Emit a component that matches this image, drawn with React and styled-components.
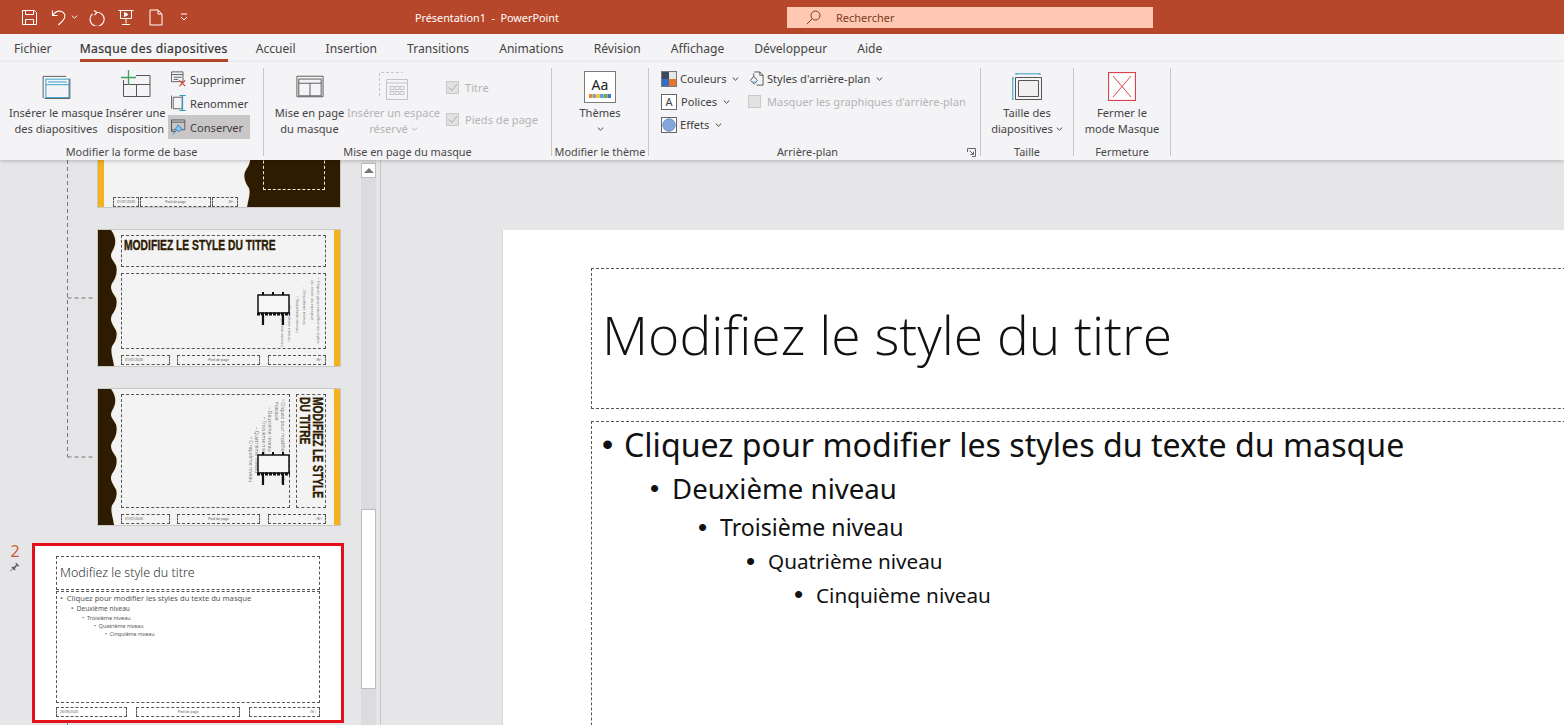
import React from "react";
import styled, { createGlobalStyle } from "styled-components";

const Global = createGlobalStyle`
  html, body { margin: 0; padding: 0; height: 100%; overflow: hidden; }
  body { font-family: "Noto Sans", "Open Sans", sans-serif; color: #3f3e3d; background: #e6e6e8; }
`;

const tabs = ["Fichier", "Masque des diapositives", "Accueil", "Insertion", "Transitions", "Animations", "Révision", "Affichage", "Développeur", "Aide"];
const levels = ["Cliquez pour modifier les styles du texte du masque", "Deuxième niveau", "Troisième niveau", "Quatrième niveau", "Cinquième niveau"];

const Chevron = () => (
  <ChevronSvg viewBox="0 0 7 4"><path d="M.8.6 3.5 3.2 6.2.6" fill="none" stroke="currentColor" strokeWidth="1" /></ChevronSvg>
);

const SaveIcon = () => (
  <svg width="17" height="17" viewBox="0 0 17 17" fill="none" stroke="#fff" strokeWidth="1">
    <path d="M1.500 1.500h12l2 2v12h-14z" /><path d="M4.500 1.500v4h8v-4M4.500 15.500v-5h8v5" />
  </svg>
);
const UndoIcon = () => (
  <svg width="16" height="17" viewBox="0 0 16 17" fill="none" stroke="#fff" strokeWidth="1.100">
    <path d="M1.500 1.500v5h5M1.800 6.200C4 3 7.500 1.500 10.500 2.500c3 1 4.200 4.200 2.800 7-1 2-3.500 4.500-6 6.500" />
  </svg>
);
const RedoIcon = () => (
  <svg width="17" height="17" viewBox="0 0 17 17" fill="none" stroke="#fff" strokeWidth="1.100">
    <path d="M5 1.500 8 3.500 5.500 6M7.500 3.300a7 7 0 1 1-4 1.700" />
  </svg>
);
const SlideShowIcon = () => (
  <svg width="16" height="17" viewBox="0 0 16 17" fill="none" stroke="#fff" strokeWidth="1">
    <path d="M.5 1.500h15M2.500 1.500v8h11v-8M8 9.500v5M4 15.500h8" /><path d="M6.500 3.500v4l3.500-2z" fill="#fff" />
  </svg>
);
const NewDocIcon = () => (
  <svg width="14" height="17" viewBox="0 0 14 17" fill="none" stroke="#fff" strokeWidth="1">
    <path d="M1 1h8l4 4v11H1zM9 1v4h4" />
  </svg>
);
const CustomizeIcon = () => (
  <svg width="8" height="8" viewBox="0 0 8 8" fill="none" stroke="#fff" strokeWidth="1">
    <path d="M1 1h6M1 4l3 3 3-3" />
  </svg>
);
const SearchIcon = () => (
  <svg width="15" height="15" viewBox="0 0 15 15" fill="none" stroke="#7d3a22" strokeWidth="1">
    <circle cx="9.500" cy="5.500" r="4.500" /><path d="M6.200 8.800.8 14.200" />
  </svg>
);

const InsertMasterIcon = () => (
  <svg width="29" height="24" viewBox="0 0 30 26" fill="none">
    <path d="M.5 25V1.500h25" stroke="#555" />
    <rect x="3.500" y="4.500" width="25" height="20" stroke="#2d9bc6" />
    <path d="M3.500 10.500h25M6 7.500h20" stroke="#2d9bc6" />
    <path d="M2 25.500h27.500V4" stroke="#555" />
  </svg>
);
const InsertLayoutIcon = () => (
  <svg width="30" height="27" viewBox="0 0 30 27" fill="none">
    <path d="M2.500 10v16.500h26.500v-21h-14M2.500 14.500h26.500M15.500 14.500v12" stroke="#555" />
    <path d="M7.500 0v15M0 7.500h15" stroke="#3da35d" strokeWidth="1.300" />
  </svg>
);
const DeleteIcon = () => (
  <svg width="16" height="16" viewBox="0 0 18 17" fill="none">
    <path d="M.5.500h13v11H.5zM.5 3.500h13M3 6.500h9M3 9h5" stroke="#555" />
    <path d="M9.500 10l6.500 6.500M16 10l-6.500 6.500" stroke="#d83b3b" strokeWidth="1.300" />
  </svg>
);
const RenameIcon = () => (
  <svg width="16" height="18" viewBox="0 0 18 18" fill="none">
    <path d="M2.500 2.500h10v13h-10zM.5.500v15" stroke="#555" />
    <path d="M9.500.500h7M13 .5v17M9.500 17.500h7" stroke="#2d9bc6" strokeWidth="1.200" />
  </svg>
);
const PreserveIcon = () => (
  <svg width="16" height="17" viewBox="0 0 18 18" fill="none">
    <path d="M.5.500h15v11H.5zM.5 3h15M.5.500v13h5" stroke="#555" />
    <path d="M8 6l5 5-2.500 1-2 2-3.500-3.500 2-2zM6 12.500 2 17" stroke="#2d7fc6" fill="#8cc3ea" />
  </svg>
);
const LayoutIcon = () => (
  <svg width="28" height="23" viewBox="0 0 30 24" fill="none" stroke="#555">
    <path d="M1 1h28v22H1zM3 4h24v18H3zM3 8.500h24M15 8.500V22" />
  </svg>
);
const PlaceholderIcon = () => (
  <svg width="30" height="29" viewBox="0 0 30 29" fill="none" stroke="#c4c4c6">
    <path d="M.5 24V.5h23" strokeDasharray="3 2" />
    <path d="M7.500 7.500h21v20h-21zM7.500 11h21M11 14.500h4v3h-4zM16 14.500h4v3h-4zM21 14.500h4v3h-4zM11 19.500h4v3h-4zM16 19.500h4v3h-4zM21 19.500h4v3h-4z" />
  </svg>
);
const ThemeIcon = () => (
  <ThemeBox>
    <ThemeLetters>Aa</ThemeLetters>
    <svg width="22" height="4" viewBox="0 0 22 4">
      {["#e8883a", "#9c9c9c", "#f2c230", "#5b9bd5", "#70ad47", "#4472c4"].map((c, i) => (
        <rect key={c} x={i * 3.700} width="3.500" height="4" fill={c} />
      ))}
    </svg>
  </ThemeBox>
);
const ColorsIcon = () => (
  <svg width="16" height="16" viewBox="0 0 16 16">
    <rect x=".5" y=".5" width="15" height="15" fill="#fff" stroke="#777" />
    <rect x="1" y="1" width="7" height="7" fill="#3a4a5c" />
    <rect x="8" y="1" width="7" height="7" fill="#e6e6e6" />
    <rect x="1" y="8" width="7" height="7" fill="#2f6fc4" />
    <rect x="8" y="8" width="7" height="7" fill="#e8742a" />
  </svg>
);
const EffectsIcon = () => (
  <svg width="16" height="16" viewBox="0 0 16 16">
    <rect x=".5" y=".5" width="15" height="15" fill="#fff" stroke="#666" />
    <circle cx="8" cy="8" r="6.200" fill="#86a6dc" stroke="#6a8cc6" />
  </svg>
);
const BackgroundStyleIcon = () => (
  <svg width="15" height="16" viewBox="0 0 16 17" fill="none" stroke="#555">
    <path d="M5.500 1h6l3.500 3.500V15H8M11.500 1v3.500H15" />
    <path d="M5 5.500 9 10l-3.500 4L1.500 10zM5 5.500V2.500" />
    <path d="M2.500 10.500h5.500L5.500 13.500z" fill="#9ec3e8" stroke="none" />
  </svg>
);
const SlideSizeIcon = () => (
  <svg width="30" height="27" viewBox="0 0 30 27" fill="none">
    <path d="M4 .8h24M4 0v2M28 0v2M.8 5v22M0 5h2M0 27h2" stroke="#2d9bc6" />
    <path d="M3.500 4.500h26v22h-26z" stroke="#555" />
    <path d="M6.500 7.500h20v16h-20z" stroke="#555" fill="#f0f0ee" />
  </svg>
);
const CloseIcon = () => (
  <svg width="28" height="29" viewBox="0 0 28 29" fill="none" stroke="#d9434e">
    <rect x=".5" y=".5" width="27" height="28" fill="#fff" strokeWidth="1.200" />
    <path d="M5 4l18 21M23 4 5 25" />
  </svg>
);
const Launcher = () => (
  <svg width="9" height="9" viewBox="0 0 9 9" fill="none" stroke="#666">
    <path d="M.5 4V.5h8v8H5M2.500 2.500l4 4M6.500 3.500v3h-3" />
  </svg>
);
const PinIcon = () => (
  <svg width="10" height="10" viewBox="0 0 10 10" fill="#666">
    <path d="M6 .5 9.500 4 8.500 4.500 7 4 5 6.500 5.500 8 4.500 8.500 1.500 5.500 2 4.500 3.500 5 6 3 5.500 1.500zM3 7 .5 9.500 0 9l2.500-2.500z" />
  </svg>
);
const Wave = ({ flip }) => (
  <WaveSvg viewBox="0 0 20 138" preserveAspectRatio="none" $flip={flip}>
    <path
      d="M0 0H14C20 8 19 16 15 22 12 28 16 30 19 36 21 44 18 50 15 54 12 60 16 64 19 69 21 76 18 82 15 86 12 92 16 96 19 102 21 108 18 114 15 118 13 124 16 130 17 138H0Z"
      fill="#f4e9d8"
    />
    <path
      d="M0 0H13C19 8 18 16 14 22 11 28 15 30 18 36 20 44 17 50 14 54 11 60 15 64 18 69 20 76 17 82 14 86 11 92 15 96 18 102 20 108 17 114 14 118 12 124 15 130 16 138H0Z"
      fill="#2e1c02"
    />
  </WaveSvg>
);
const Billboard = () => (
  <svg width="34" height="33" viewBox="0 0 34 33" fill="none" stroke="#111">
    <path d="M6 0v4M16 0v4M26 0v4" strokeWidth="2" />
    <rect x="1" y="3" width="31" height="18" fill="#f6f6f6" strokeWidth="1.500" />
    <path d="M0 22h33" strokeWidth="3" strokeDasharray="3 1" />
    <path d="M6 23v10M26 23v10" strokeWidth="2.200" />
  </svg>
);
const TreeLines = () => (
  <Tree width="100" height="565" viewBox="0 0 100 565" fill="none" stroke="#777" strokeDasharray="4 3">
    <path d="M67.500 0V297M67.500 138H95M67.500 297H95M67.500 562V565" />
  </Tree>
);

const LargeButton = ({ icon, lines, width, disabled, chevron, tall, raised }) => (
  <LargeBtn $w={width} $disabled={disabled}>
    <LargeIconSlot $raised={raised}>{icon}</LargeIconSlot>
    {lines.map((l, i) => (
      <div key={l}>
        {l}
        {chevron && i === lines.length - 1 && !tall && <Chevron />}
      </div>
    ))}
    {tall && <TallChevron><Chevron /></TallChevron>}
  </LargeBtn>
);

const SmallButton = ({ icon, label, chevron, active, tall }) => (
  <SmallBtn $active={active} $tall={tall}>
    {icon}
    <span>{label}</span>
    {chevron && <Chevron />}
  </SmallBtn>
);

const Check = ({ checked, label }) => (
  <CheckRow>
    <CheckBox>
      {checked && (
        <svg width="10" height="9" viewBox="0 0 10 9" fill="none" stroke="#a9a9aa">
          <path d="M1 4.500 3.800 7.500 9 1" />
        </svg>
      )}
    </CheckBox>
    {label}
  </CheckRow>
);

const Footer = ({ widths, gaps, date, center, num, mt }) => (
  <FooterRow $mt={mt}>
    <FootBox $w={widths[0]}>{date}</FootBox>
    <FootBox $w={widths[1]} $ml={gaps[0]} $center>{center}</FootBox>
    <FootBox $w={widths[2]} $ml={gaps[1]} $right>{num}</FootBox>
  </FooterRow>
);

export default function App() {
  return (
    <Page>
      <Global />
      <TitleBar>
        <Qat>
          <QatSlot $ml={0}><SaveIcon /></QatSlot>
          <QatSlot $ml={13}><UndoIcon /><Chevron /></QatSlot>
          <QatSlot $ml={11}><RedoIcon /></QatSlot>
          <QatSlot $ml={12}><SlideShowIcon /></QatSlot>
          <QatSlot $ml={15}><NewDocIcon /></QatSlot>
          <QatSlot $ml={17}><CustomizeIcon /></QatSlot>
        </Qat>
        <DocTitle>Présentation1&nbsp; - &nbsp;PowerPoint</DocTitle>
        <SearchBox>
          <SearchIcon />
          <span>Rechercher</span>
        </SearchBox>
      </TitleBar>

      <TabBar>
        {tabs.map((t, i) => (
          <Tab key={t} $active={i === 1}>{t}</Tab>
        ))}
      </TabBar>

      <Ribbon>
        <Group $w={264} $pad={9} label="Modifier la forme de base">
          <LargeButton icon={<InsertMasterIcon />} lines={["Insérer le masque", "des diapositives"]} width={94} />
          <LargeButton icon={<InsertLayoutIcon />} lines={["Insérer une", "disposition"]} width={65} raised />
          <SmallCol $w={82} $up>
            <SmallButton tall icon={<DeleteIcon />} label="Supprimer" />
            <SmallButton tall icon={<RenameIcon />} label="Renommer" />
            <SmallButton tall icon={<PreserveIcon />} label="Conserver" active />
          </SmallCol>
        </Group>
        <Group $w={288} $pad={8} label="Mise en page du masque">
          <LargeButton icon={<LayoutIcon />} lines={["Mise en page", "du masque"]} width={75} />
          <LargeButton icon={<PlaceholderIcon />} lines={["Insérer un espace", "réservé"]} width={93} disabled chevron />
          <CheckCol>
            <Check checked label="Titre" />
            <Check checked label="Pieds de page" />
          </CheckCol>
        </Group>
        <Group $w={97} label="Modifier le thème">
          <LargeButton icon={<ThemeIcon />} lines={["Thèmes"]} width={95} chevron tall />
        </Group>
        <Group $w={332} label="Arrière-plan" launcher>
          <StyleCols>
            <SmallCol $w={88}>
              <SmallButton icon={<ColorsIcon />} label="Couleurs" chevron />
              <SmallButton icon={<FontBox>A</FontBox>} label="Polices" chevron />
              <SmallButton icon={<EffectsIcon />} label="Effets" chevron />
            </SmallCol>
            <SmallCol>
              <SmallButton icon={<BackgroundStyleIcon />} label="Styles d'arrière-plan" chevron />
              <MutedCheck><CheckBox />Masquer les graphiques d'arrière-plan</MutedCheck>
            </SmallCol>
          </StyleCols>
        </Group>
        <Group $w={93} label="Taille">
          <LargeButton icon={<SlideSizeIcon />} lines={["Taille des", "diapositives"]} width={90} chevron />
        </Group>
        <Group $w={97} label="Fermeture">
          <LargeButton icon={<CloseIcon />} lines={["Fermer le", "mode Masque"]} width={90} />
        </Group>
      </Ribbon>

      <Main>
        <Pane>
          <ThumbList>
            <TreeLines />
            <Thumb $h={48} $first>
              <YellowBar />
              <FirstThumbBody>
                <Footer widths={[26, 71, 26]} gaps={[1, 1]} date="01/01/2020" center="Pied de page" num="‹N°›" />
              </FirstThumbBody>
              <BrownSide>
                <WaveLeft><Wave flip /></WaveLeft>
                <WhiteBox />
              </BrownSide>
            </Thumb>

            <Thumb $h={138}>
              <Wave />
              <ThumbBody>
                <TitleBox $h={32}><PosterTitle>MODIFIEZ LE STYLE DU TITRE</PosterTitle></TitleBox>
                <VerticalBody $h={76} $mt={6}>
                  <VTextCol>
                    <VText $indent={0}>• Cliquez pour modifier les styles<br />&nbsp; du texte du masque</VText>
                    <VText $indent={9}>– Deuxième niveau</VText>
                    <VText $indent={18}>• Troisième niveau</VText>
                    <VText $indent={24}>– Quatrième niveau</VText>
                    <VText $indent={30}>• Cinquième niveau</VText>
                  </VTextCol>
                  <BillboardSpot $left={135} $top={18}><Billboard /></BillboardSpot>
                </VerticalBody>
                <Footer widths={[49, 83, 58]} gaps={[7, 8]} date="01/01/2020" center="Pied de page" num="‹N°›" />
              </ThumbBody>
              <YellowBar $end />
            </Thumb>

            <Thumb $h={138}>
              <Wave />
              <ThumbBody>
                <TallRow>
                  <VerticalBody $w={169} $h={114}>
                    <VTextCol $wide>
                      <VText $indent={0} $wide>• Cliquez pour modifier les styles du<br />&nbsp; masque</VText>
                      <VText $indent={8} $wide>– Deuxième niveau</VText>
                      <VText $indent={18} $wide>• Troisième niveau</VText>
                      <VText $indent={28} $wide>– Quatrième niveau</VText>
                      <VText $indent={38} $wide>• Cinquième niveau</VText>
                    </VTextCol>
                    <BillboardSpot $left={135} $top={57}><Billboard /></BillboardSpot>
                  </VerticalBody>
                  <VerticalTitle>
                    <VerticalTitleText>MODIFIEZ LE STYLE<br />DU TITRE</VerticalTitleText>
                  </VerticalTitle>
                </TallRow>
                <Footer widths={[49, 83, 58]} gaps={[7, 8]} date="01/01/2020" center="Pied de page" num="‹N°›" />
              </ThumbBody>
              <YellowBar $end />
            </Thumb>

            <SelectedRow>
              <SlideIndex>
                <SlideNumber>2</SlideNumber>
                <PinIcon />
              </SlideIndex>
              <SelectedThumb>
                <MiniTitle>Modifiez le style du titre</MiniTitle>
                <MiniBody>
                  <MiniLevel $size={7.600} $indent={0} $mt={2}>• &nbsp;{levels[0]}</MiniLevel>
                  <MiniLevel $size={6.500} $indent={11} $mt={3}>• &nbsp;{levels[1]}</MiniLevel>
                  <MiniLevel $size={5.500} $indent={22} $mt={1}>• &nbsp;{levels[2]}</MiniLevel>
                  <MiniLevel $size={5.300} $indent={34} $mt={0}>• &nbsp;{levels[3]}</MiniLevel>
                  <MiniLevel $size={5.300} $indent={45} $mt={0}>• &nbsp;{levels[4]}</MiniLevel>
                </MiniBody>
                <Footer widths={[71, 105, 71]} gaps={[9, 9]} date="26/09/2020" center="Pied de page" num="‹N°›" mt={4} />
              </SelectedThumb>
            </SelectedRow>
          </ThumbList>
          <Scrollbar>
            <ScrollUp><svg width="10" height="5" viewBox="0 0 10 5"><path d="M5 0 10 5H0z" fill="#777" /></svg></ScrollUp>
            <ScrollThumb />
          </Scrollbar>
        </Pane>

        <Canvas>
          <Slide>
            <SlideTitle>Modifiez le style du titre</SlideTitle>
            <SlideBody>
              {levels.map((text, i) => (
                <Level key={text} $level={i}>
                  <Bullet $level={i}>•</Bullet>
                  {text}
                </Level>
              ))}
            </SlideBody>
          </Slide>
        </Canvas>
      </Main>
    </Page>
  );
}

function Group({ $w, $pad, label, launcher, children }) {
  return (
    <GroupBox $w={$w}>
      <GroupContent $pad={$pad}>{children}</GroupContent>
      <GroupLabel $launcher={launcher}>{label}{launcher && <LauncherSpot><Launcher /></LauncherSpot>}</GroupLabel>
    </GroupBox>
  );
}

const Page = styled.div`
  width: 100vw;
  height: 100vh;
  display: flex;
  flex-direction: column;
  overflow: hidden;
`;

const TitleBar = styled.header`
  height: 34px;
  flex: none;
  background: #b7472a;
  display: flex;
  align-items: center;
  color: #fff;
`;
const Qat = styled.div`
  width: 415px;
  padding-left: 21px;
  box-sizing: border-box;
  display: flex;
  align-items: center;
  flex: none;
`;
const QatSlot = styled.div`
  display: flex;
  align-items: center;
  gap: 1px;
  margin-left: ${(p) => p.$ml}px;
  color: #fff;
`;
const DocTitle = styled.div`
  width: 372px;
  flex: none;
  font-size: 10.8px;
  white-space: nowrap;
`;
const SearchBox = styled.div`
  width: 366px;
  height: 21px;
  background: #ffc8b2;
  color: #7d3a22;
  display: flex;
  align-items: center;
  gap: 15px;
  padding-left: 19px;
  box-sizing: border-box;
  font-size: 11px;
`;

const TabBar = styled.nav`
  height: 28px;
  flex: none;
  background: #f4f3f6;
  display: flex;
  gap: 30px;
  padding-left: 14px;
  font-size: 12.1px;
`;
const Tab = styled.div`
  height: 28px;
  line-height: 30px;
  box-sizing: border-box;
  white-space: nowrap;
  color: ${(p) => (p.$active ? "#333" : "#444")};
  ${(p) => p.$active && "margin: 0 -2px; letter-spacing: .4px; border-bottom: 3px solid #b7472a; -webkit-text-stroke: .2px #333;"}
`;

const Ribbon = styled.section`
  height: 98px;
  flex: none;
  background: #f4f3f6;
  display: flex;
  box-shadow: 0 1px 4px rgba(0, 0, 0, 0.22);
  position: relative;
  z-index: 2;
  font-size: 11.1px;
`;
const GroupBox = styled.div`
  width: ${(p) => p.$w}px;
  flex: none;
  box-sizing: border-box;
  margin: 6px 0 4px;
  border-right: 1px solid #c8c6c8;
  display: flex;
  flex-direction: column;
`;
const GroupContent = styled.div`
  flex: 1;
  display: flex;
  justify-content: ${(p) => (p.$pad ? "flex-start" : "center")};
  padding-left: ${(p) => p.$pad || 0}px;
  min-height: 0;
`;
const GroupLabel = styled.div`
  height: 14px;
  line-height: 14px;
  margin-bottom: -3px;
  padding-right: ${(p) => (p.$launcher ? 14 : 0)}px;
  text-align: center;
  font-size: 10.9px;
  color: #4a4948;
  position: relative;
  white-space: nowrap;
`;
const LauncherSpot = styled.span`
  position: absolute;
  right: 4px;
  top: 3px;
  line-height: 0;
`;
const LargeBtn = styled.div`
  width: ${(p) => p.$w}px;
  flex: none;
  text-align: center;
  line-height: 16px;
  white-space: nowrap;
  color: ${(p) => (p.$disabled ? "#b5b4b5" : "#444")};
  display: flex;
  flex-direction: column;
  align-items: center;
`;
const LargeIconSlot = styled.div`
  height: 37px;
  box-sizing: border-box;
  padding-bottom: ${(p) => (p.$raised ? 6 : 0)}px;
  display: flex;
  align-items: center;
  justify-content: center;
`;
const ChevronSvg = styled.svg`
  width: 7px;
  height: 4px;
  margin-left: 3px;
  vertical-align: 2px;
  flex: none;
`;
const TallChevron = styled.div`
  height: 16px;
  line-height: 16px;
  margin-left: -3px;
`;
const SmallCol = styled.div`
  ${(p) => p.$w && `width: ${p.$w}px;`}
  ${(p) => p.$up && "margin-top: -1px;"}
  flex: none;
  display: flex;
  flex-direction: column;
`;
const SmallBtn = styled.div`
  height: ${(p) => (p.$tall ? 24 : 23)}px;
  display: flex;
  align-items: center;
  gap: 3px;
  padding-left: 3px;
  white-space: nowrap;
  background: ${(p) => (p.$active ? "#c8c6c6" : "transparent")};
`;
const CheckCol = styled.div`
  display: flex;
  flex-direction: column;
  gap: 17px;
  padding: 12px 0 0 6px;
  flex: none;
`;
const CheckRow = styled.div`
  display: flex;
  align-items: center;
  gap: 6px;
  color: #b5b4b5;
  white-space: nowrap;
`;
const CheckBox = styled.span`
  width: 11px;
  height: 11px;
  background: #e2e2e3;
  border: 1px solid #c9c9ca;
  display: flex;
  align-items: center;
  justify-content: center;
  flex: none;
`;
const MutedCheck = styled(CheckRow)`
  height: 23px;
  padding-left: 2px;
`;
const StyleCols = styled.div`
  display: flex;
  width: 100%;
  margin-top: -1px;
  padding-left: 9px;
  box-sizing: border-box;
`;
const ThemeBox = styled.div`
  width: 32px;
  height: 32px;
  box-sizing: border-box;
  background: #fff;
  border: 1px solid #7b7b7b;
  display: flex;
  flex-direction: column;
  align-items: center;
`;
const ThemeLetters = styled.div`
  font-size: 14px;
  line-height: 19px;
  margin-top: 3px;
  color: #222;
`;
const FontBox = styled.span`
  width: 14px;
  height: 14px;
  margin-right: 1px;
  background: #fff;
  border: 1px solid #666;
  font-size: 11px;
  line-height: 14px;
  text-align: center;
  flex: none;
`;

const Main = styled.main`
  flex: 1;
  min-height: 0;
  display: flex;
`;
const Pane = styled.aside`
  width: 381px;
  flex: none;
  box-sizing: border-box;
  border-right: 1px solid #c8c8ca;
  background: #e6e6e8;
  display: flex;
  overflow: hidden;
`;
const ThumbList = styled.div`
  width: 361px;
  flex: none;
  position: relative;
`;
const Tree = styled.svg`
  position: absolute;
  left: 0;
  top: 0;
`;
const Thumb = styled.div`
  width: 244px;
  height: ${(p) => p.$h}px;
  margin: ${(p) => (p.$first ? "0" : "21px")} 0 0 97px;
  box-sizing: border-box;
  background: #f4f3f4;
  border: 1px solid #c8c8c6;
  ${(p) => p.$first && "border-top: 0;"}
  display: flex;
  overflow: hidden;
  position: relative;
`;
const YellowBar = styled.div`
  width: 6px;
  flex: none;
  background: #f4b223;
  ${(p) => p.$end && "margin-left: auto;"}
`;
const WaveSvg = styled.svg`
  width: 20px;
  height: 100%;
  flex: none;
  transform: ${(p) => (p.$flip ? "scaleX(-1)" : "none")};
`;
const FirstThumbBody = styled.div`
  width: 139px;
  flex: none;
  padding: 31px 0 0 9px;
  box-sizing: border-box;
`;
const BrownSide = styled.div`
  flex: 1;
  background: #2e1c02;
  position: relative;
`;
const WaveLeft = styled.div`
  position: absolute;
  left: 0;
  top: -90px;
  height: 138px;
  width: 20px;
  background: #f4f3f4;
`;
const WhiteBox = styled.div`
  position: absolute;
  left: 20px;
  top: -10px;
  width: 60px;
  height: 38px;
  border: 1px dashed #f5efe3;
`;
const ThumbBody = styled.div`
  width: 205px;
  margin: 5px 0 0 3px;
  flex: none;
`;
const TitleBox = styled.div`
  height: ${(p) => p.$h}px;
  box-sizing: border-box;
  border: 1px dashed #555;
  padding: 2px 2px;
`;
const PosterTitle = styled.div`
  font-family: "Liberation Sans", sans-serif;
  font-weight: 700;
  font-size: 14.5px;
  line-height: 14px;
  color: #2e1c02;
  white-space: nowrap;
  transform: scaleX(0.71);
  transform-origin: left center;
  -webkit-text-stroke: 0.4px #2e1c02;
`;
const VerticalBody = styled.div`
  width: ${(p) => (p.$w ? `${p.$w}px` : "auto")};
  height: ${(p) => p.$h}px;
  margin-top: ${(p) => p.$mt || 0}px;
  box-sizing: border-box;
  border: 1px dashed #555;
  position: relative;
  display: flex;
  justify-content: flex-end;
  flex: none;
`;
const VTextCol = styled.div`
  display: flex;
  flex-direction: row-reverse;
  gap: ${(p) => (p.$wide ? 0 : 1)}px;
  padding: 4px 3px 0 0;
`;
const VText = styled.div`
  writing-mode: vertical-rl;
  font-size: ${(p) => (p.$wide ? 5 : 4.300)}px;
  line-height: 6.500px;
  color: #777;
  white-space: nowrap;
  padding-top: ${(p) => p.$indent}px;
`;
const BillboardSpot = styled.div`
  position: absolute;
  left: ${(p) => p.$left}px;
  top: ${(p) => p.$top}px;
  line-height: 0;
`;
const TallRow = styled.div`
  display: flex;
  gap: 6px;
`;
const VerticalTitle = styled.div`
  width: 31px;
  height: 114px;
  box-sizing: border-box;
  border: 1px dashed #555;
  overflow: hidden;
  padding: 2px 1px 0 0;
`;
const VerticalTitleText = styled.div`
  writing-mode: vertical-rl;
  font-family: "Liberation Sans", sans-serif;
  font-weight: 700;
  font-size: 14.5px;
  line-height: 13px;
  color: #2e1c02;
  white-space: nowrap;
  float: right;
  transform: scaleY(0.71);
  transform-origin: top center;
  -webkit-text-stroke: 0.4px #2e1c02;
`;
const FooterRow = styled.div`
  display: flex;
  margin-top: ${(p) => (p.$mt === undefined ? 6 : p.$mt)}px;
`;
const FootBox = styled.div`
  width: ${(p) => p.$w}px;
  margin-left: ${(p) => p.$ml || 0}px;
  height: 10px;
  box-sizing: border-box;
  border: 1px dashed #555;
  font-size: 3.400px;
  line-height: 8px;
  padding: 0 3px;
  color: #555;
  overflow: hidden;
  white-space: nowrap;
  text-align: ${(p) => (p.$center ? "center" : p.$right ? "right" : "left")};
`;
const SelectedRow = styled.div`
  display: flex;
  margin-top: 17px;
`;
const SlideIndex = styled.div`
  width: 32px;
  flex: none;
  display: flex;
  flex-direction: column;
  align-items: center;
  padding-right: 2px;
  box-sizing: border-box;
`;
const SlideNumber = styled.div`
  font-size: 16px;
  line-height: 16px;
  color: #cc5a3c;
  margin-bottom: 3px;
`;
const SelectedThumb = styled.div`
  width: 312px;
  height: 180px;
  box-sizing: border-box;
  background: #fff;
  border: 3px solid #e4111b;
  padding: 10px 21px 0;
  flex: none;
`;
const MiniTitle = styled.div`
  height: 34px;
  box-sizing: border-box;
  border: 1px dashed #555;
  font-size: 12.500px;
  line-height: 31px;
  font-weight: 300;
  padding-left: 3px;
  color: #333;
  white-space: nowrap;
`;
const MiniBody = styled.div`
  height: 112px;
  margin-top: 1px;
  box-sizing: border-box;
  border: 1px dashed #555;
  padding: 0 0 0 3px;
  color: #555;
  white-space: nowrap;
`;
const MiniLevel = styled.div`
  font-size: ${(p) => p.$size}px;
  line-height: 8px;
  margin: ${(p) => p.$mt}px 0 0 ${(p) => p.$indent}px;
`;
const Scrollbar = styled.div`
  width: 15px;
  flex: none;
  background: #dcdcde;
  display: flex;
  flex-direction: column;
`;
const ScrollUp = styled.div`
  height: 15px;
  margin-top: 3px;
  background: #fff;
  border: 1px solid #bdbdbf;
  box-sizing: border-box;
  display: flex;
  align-items: center;
  justify-content: center;
`;
const ScrollThumb = styled.div`
  height: 180px;
  margin-top: 331px;
  background: #fff;
  border: 1px solid #bdbdbf;
  box-sizing: border-box;
`;

const Canvas = styled.div`
  flex: 1;
  min-width: 0;
  background: #e6e6e8;
  padding: 70px 0 0 121px;
  overflow: hidden;
`;
const Slide = styled.div`
  width: 1200px;
  height: 700px;
  background: #fff;
  padding: 38px 0 0 88px;
  box-sizing: border-box;
  border-left: 1px solid #d8d8d8;
`;
const SlideTitle = styled.div`
  width: 1100px;
  height: 141px;
  box-sizing: border-box;
  border: 1px dashed #555;
  display: flex;
  align-items: center;
  padding: 0 0 8px 10px;
  font-family: "Open Sans", sans-serif;
  font-weight: 300;
  font-size: 53.400px;
  color: #111;
`;
const SlideBody = styled.div`
  width: 1100px;
  height: 400px;
  margin-top: 12px;
  box-sizing: border-box;
  border: 1px dashed #555;
  padding: 0 0 0 10px;
  color: #111;
`;
const levelSizes = [32.150, 27.600, 23.100, 20.700, 20.700];
const levelHeights = [44, 44, 34, 34, 33];
const Level = styled.div`
  display: flex;
  height: ${(p) => levelHeights[p.$level]}px;
  align-items: center;
  font-size: ${(p) => levelSizes[p.$level]}px;
  margin-left: ${(p) => p.$level * 48}px;
  white-space: nowrap;
`;
const Bullet = styled.span`
  width: 22px;
  flex: none;
  font-size: ${(p) => (p.$level === 0 ? 32 : 26)}px;
  font-family: "Liberation Sans", sans-serif;
`;
